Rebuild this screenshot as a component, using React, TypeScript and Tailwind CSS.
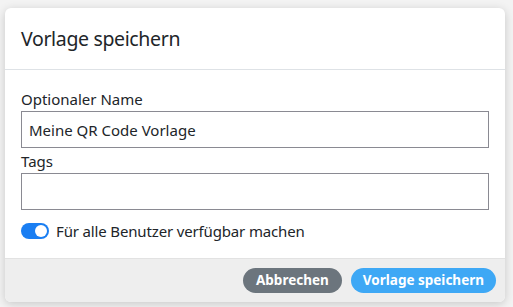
import React, { useState } from "react";

const font = { fontFamily: '"Noto Sans", "Open Sans", sans-serif' };

export default function App() {
  const [name, setName] = useState("Meine QR Code Vorlage");
  const [tags, setTags] = useState("");
  const [shared, setShared] = useState(true);

  return (
    <div className="w-[513px] h-[307px] bg-[#f3f3f3] pt-[8px] px-[5px] overflow-hidden" style={font}>
      <div className="w-[500px] bg-white rounded-[6px] shadow-[0_2px_10px_rgba(0,0,0,0.18)] overflow-hidden">
        {/* header */}
        <div className="h-[62px] border-b border-[#dee2e6] flex items-center px-[16px]">
          <h2 className="text-[19.5px] tracking-[-0.35px] text-[#212529] leading-none">Vorlage speichern</h2>
        </div>

        {/* body */}
        <div className="px-[16px] pt-[17px] pb-[15px] flex flex-col">
          <label className="text-[15px] text-[#212529] leading-[24px]">Optionaler Name</label>
          <input
            value={name}
            onChange={(e) => setName(e.target.value)}
            className="h-[37px] border border-[#8a8a92] px-[7px] text-[15px] text-[#212529] outline-none"
          />
          <label className="text-[15px] text-[#212529] leading-[24px] mt-[1px]">Tags</label>
          <input
            value={tags}
            onChange={(e) => setTags(e.target.value)}
            className="h-[37px] border border-[#8a8a92] px-[7px] text-[15px] outline-none"
          />
          <div className="flex items-center gap-[7px] mt-[10px]">
            <button
              onClick={() => setShared(!shared)}
              className={`w-[28px] h-[16px] rounded-full flex items-center px-[2px] ${shared ? "bg-[#1a7ef2] justify-end" : "bg-gray-300 justify-start"}`}
            >
              <span className="w-[12px] h-[12px] rounded-full bg-white" />
            </button>
            <span className="text-[15px] tracking-[-0.15px] text-[#212529]">Für alle Benutzer verfügbar machen</span>
          </div>
        </div>

        {/* footer */}
        <div className="h-[44px] bg-[#eeeeee] border-t border-[#e2e2e2] flex items-center justify-end gap-[9px] pr-[9px]">
          <button className="h-[25px] px-[13px] rounded-full bg-[#6c757d] text-white text-[13.5px] font-bold">
            Abbrechen
          </button>
          <button className="h-[25px] px-[12px] rounded-full bg-[#3ea8f5] text-white text-[13.5px] font-bold">
            Vorlage speichern
          </button>
        </div>
      </div>
    </div>
  );
}
